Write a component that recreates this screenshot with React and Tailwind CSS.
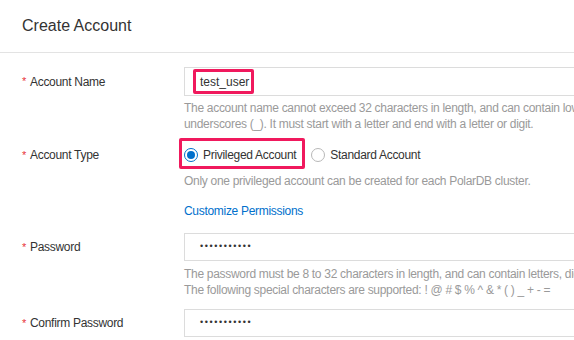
import React from 'react';

const font = { fontFamily: '"Liberation Sans", Arial, sans-serif' };

function Label({ children, h }) {
  return (
    <div className={`w-[184px] shrink-0 pl-[22px] flex items-center self-start text-[12px] tracking-[-0.3px] text-[#333] ${h}`}>
      <span className="text-[#e8343b] mr-[4px] text-[11px]">*</span>
      {children}
    </div>
  );
}

function Help({ children }) {
  return (
    <div className="text-[12px] leading-[16px] tracking-[-0.3px] text-[#9a9a9a] whitespace-nowrap">
      {children}
    </div>
  );
}

function Input({ children }) {
  return (
    <div className="relative w-[420px] h-full border border-[#dcdcdc] bg-white flex items-center pl-[15px] text-[12px] text-[#333]">
      {children}
    </div>
  );
}

function Dots() {
  return <span className="text-[9px] tracking-[1.6px] text-[#333]">•••••••••••</span>;
}

function Radio({ checked, label, highlight }) {
  return (
    <div className="relative flex items-center gap-[5px] h-[16px]">
      {checked ? (
        <span className="w-[14px] h-[14px] rounded-full border border-[#0070cc] flex items-center justify-center bg-white">
          <span className="w-[8px] h-[8px] rounded-full bg-[#0070cc]" />
        </span>
      ) : (
        <span className="w-[14px] h-[14px] rounded-full border border-[#b8b8b8] bg-white" />
      )}
      <span className="text-[12px] tracking-[-0.3px] text-[#333]">{label}</span>
      {highlight && (
        <span className="absolute left-[-5px] top-1/2 mt-[-17px] w-[126px] h-[31px] border-[3px] border-[#f0195d] rounded-[2px]" />
      )}
    </div>
  );
}

export default function App() {
  return (
    <div className="w-[574px] h-[340px] overflow-hidden bg-white" style={font}>
      <div className="h-[53px] border-b border-[#e3e3e3] flex items-center pl-[22px] text-[16px] text-[#333]">
        Create Account
      </div>

      {/* Account Name */}
      <div className="flex mt-[14px]">
        <Label h="h-[29px]">Account Name</Label>
        <div className="flex-1 min-w-0">
          <div className="h-[29px]">
            <Input>
              <span className="absolute left-[8px] top-[1px] w-[61px] h-[25px] border-[3px] border-[#f0195d] rounded-[2px]" />
              <span className="relative">test_user</span>
            </Input>
          </div>
          <div className="mt-[4px]">
            <Help>The account name cannot exceed 32 characters in length, and can contain lowercase letters, digits, and</Help>
            <Help>underscores (_). It must start with a letter and end with a letter or digit.</Help>
          </div>
        </div>
      </div>

      {/* Account Type */}
      <div className="flex mt-[7px]">
        <Label h="h-[32px]">Account Type</Label>
        <div className="flex-1 min-w-0">
          <div className="h-[32px] flex items-center gap-[15px]">
            <Radio checked label="Privileged Account" highlight />
            <Radio label="Standard Account" />
          </div>
          <div className="mt-[2px]">
            <Help>Only one privileged account can be created for each PolarDB cluster.</Help>
          </div>
          <div className="mt-[14px] text-[12px] leading-[16px] tracking-[-0.3px] text-[#0070cc]">
            Customize Permissions
          </div>
        </div>
      </div>

      {/* Password */}
      <div className="flex mt-[14px]">
        <Label h="h-[28px]">Password</Label>
        <div className="flex-1 min-w-0">
          <div className="h-[28px]">
            <Input><Dots /></Input>
          </div>
          <div className="mt-[5px]">
            <Help>The password must be 8 to 32 characters in length, and can contain letters, digits, and special characters.</Help>
            <Help>The following special characters are supported: ! @ # $ % ^ &amp; * ( ) _ + - =</Help>
          </div>
        </div>
      </div>

      {/* Confirm Password */}
      <div className="flex mt-[11px]">
        <Label h="h-[28px]">Confirm Password</Label>
        <div className="flex-1 min-w-0">
          <div className="h-[28px]">
            <Input><Dots /></Input>
          </div>
        </div>
      </div>
    </div>
  );
}
